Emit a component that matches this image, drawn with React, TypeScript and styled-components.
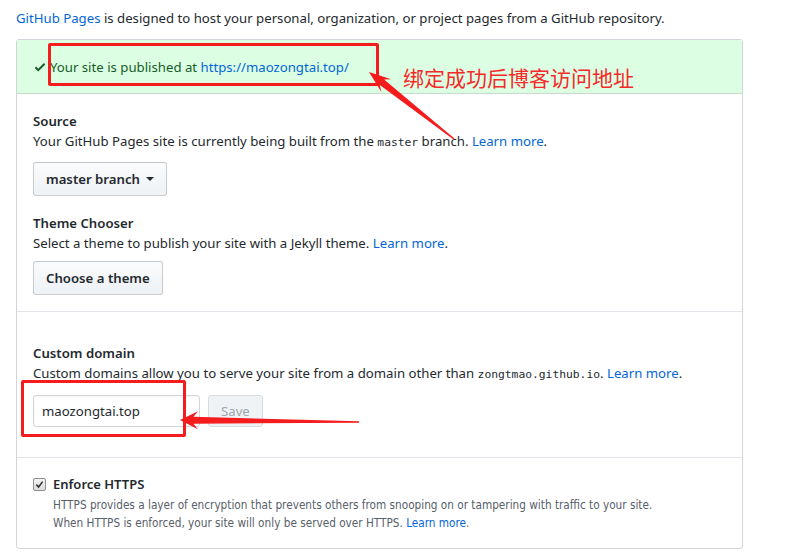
import React from "react";
import styled, { createGlobalStyle } from "styled-components";

const GlobalStyle = createGlobalStyle`
  html, body { margin: 0; padding: 0; background: #fff; }
  body {
    font-family: "Noto Sans", "Open Sans", "Noto Sans CJK SC", sans-serif;
    color: #24292e;
    font-size: 13.2px;
  }
`;

const Page = styled.div`
  position: relative;
  width: 798px;
  height: 558px;
  padding: 8px 0 0 16px;
  box-sizing: border-box;
  overflow: hidden;
`;

const Intro = styled.p`
  margin: 0 0 10px;
  line-height: 21px;
  font-size: 13.2px;
`;

const Link = styled.a`
  color: #0366d6;
  text-decoration: none;
`;

const Box = styled.div`
  width: 727px;
  border: 1px solid #d1d5da;
  border-radius: 3px;
  box-sizing: border-box;
`;

const Flash = styled.div`
  display: flex;
  align-items: center;
  gap: 3px;
  height: 54px;
  padding: 0 16px;
  background: #dcffe4;
  border-bottom: 1px solid #c9d8cc;
  color: #165c26;
  font-size: 13.2px;
  box-sizing: border-box;
`;

const Section = styled.div<{ $top: number; $bottom: number; $last?: boolean }>`
  padding: ${(p) => p.$top}px 16px ${(p) => p.$bottom}px;
  border-bottom: ${(p) => (p.$last ? "none" : "1px solid #e1e4e8")};
`;

const Heading = styled.h3`
  margin: 0;
  font-size: 13.2px;
  font-weight: 600;
  line-height: 20px;
`;

const Desc = styled.p`
  margin: 0;
  font-size: 13.2px;
  line-height: 21px;
`;

const Mono = styled.code`
  font-family: "DejaVu Sans Mono", "Liberation Mono", monospace;
  font-size: 11.3px;
`;

const Button = styled.button<{ $mt: number; $disabled?: boolean }>`
  display: inline-flex;
  align-items: center;
  gap: 6px;
  margin-top: ${(p) => p.$mt}px;
  height: 34px;
  padding: 0 12px;
  font-family: inherit;
  font-size: 13.2px;
  font-weight: 600;
  color: ${(p) => (p.$disabled ? "#a0a6ad" : "#24292e")};
  background: ${(p) =>
    p.$disabled ? "#eff3f6" : "linear-gradient(-180deg, #fafbfc 0%, #eff3f6 90%)"};
  border: 1px solid ${(p) => (p.$disabled ? "#d9dcdf" : "rgba(27,31,35,0.2)")};
  border-radius: 3px;
  box-sizing: border-box;
`;

const Caret = styled.span`
  width: 0;
  height: 0;
  border-left: 4px solid transparent;
  border-right: 4px solid transparent;
  border-top: 4px solid #24292e;
`;

const SubHeading = styled(Heading)`
  margin-top: 17px;
`;

const InputRow = styled.div`
  display: flex;
  gap: 8px;
  margin-top: 10px;
`;

const Input = styled.div`
  display: flex;
  align-items: center;
  width: 167px;
  height: 32px;
  padding: 0 8px;
  border: 1px solid #d1d5da;
  border-radius: 3px;
  box-sizing: border-box;
  font-size: 13.2px;
  box-shadow: inset 0 1px 2px rgba(27,31,35,0.05);
`;

const SaveButton = styled(Button)`
  height: 32px;
  margin-top: 0;
  font-weight: 400;
  padding: 0 12px;
`;

const CheckRow = styled.div`
  display: flex;
  align-items: center;
  gap: 7px;
`;

const CheckBox = styled.span`
  display: inline-flex;
  align-items: center;
  justify-content: center;
  width: 11px;
  height: 11px;
  border: 1px solid #8f8f8f;
  border-radius: 2px;
  background: linear-gradient(#f4f4f4, #dcdcdc);
`;

const CheckLabel = styled.span`
  font-size: 13px;
  font-weight: 600;
  line-height: 20px;
`;

const Notes = styled.div`
  margin-top: 3px;
  padding-left: 20px;
`;

const Note = styled.p`
  margin: 0;
  font-family: "Liberation Sans Narrow", "DejaVu Sans Condensed", "Noto Sans", sans-serif;
  font-size: 11.7px;
  line-height: 17.5px;
  color: #586069;
`;

const RedBox = styled.div<{ $l: number; $t: number; $w: number; $h: number }>`
  position: absolute;
  left: ${(p) => p.$l}px;
  top: ${(p) => p.$t}px;
  width: ${(p) => p.$w}px;
  height: ${(p) => p.$h}px;
  border: 3px solid #f41c1c;
  border-radius: 2px;
  box-sizing: border-box;
  pointer-events: none;
`;

const Annotation = styled.div`
  position: absolute;
  left: 403px;
  top: 63px;
  font-family: "Noto Sans CJK SC", sans-serif;
  font-size: 21px;
  line-height: 28px;
  color: #f52a2a;
  pointer-events: none;
`;

const Overlay = styled.svg`
  position: absolute;
  left: 0;
  top: 0;
  pointer-events: none;
`;

function arrow(
  tx: number, ty: number, hx: number, hy: number,
  headLen: number, headW: number, tailW: number, neckW: number
) {
  const dx = hx - tx, dy = hy - ty;
  const len = Math.hypot(dx, dy);
  const ux = dx / len, uy = dy / len;
  const nx = -uy, ny = ux;
  const bx = hx - ux * headLen, by = hy - uy * headLen;
  const nbx = hx - ux * headLen * 0.75, nby = hy - uy * headLen * 0.75;
  const pts = [
    [tx + nx * tailW / 2, ty + ny * tailW / 2],
    [nbx + nx * neckW / 2, nby + ny * neckW / 2],
    [bx + nx * headW / 2, by + ny * headW / 2],
    [hx, hy],
    [bx - nx * headW / 2, by - ny * headW / 2],
    [nbx - nx * neckW / 2, nby - ny * neckW / 2],
    [tx - nx * tailW / 2, ty - ny * tailW / 2],
  ];
  return pts.map((p) => p.map((v) => v.toFixed(1)).join(",")).join(" ");
}

export default function App() {
  return (
    <>
      <GlobalStyle />
      <Page>
        <Intro>
          <Link>GitHub Pages</Link> is designed to host your personal, organization, or project pages from a GitHub repository.
        </Intro>
        <Box>
          <Flash>
            <svg width="14" height="14" viewBox="0 0 12 16">
              <path fill="#165c26" fillRule="evenodd" d="M12 5l-8 8-4-4 1.5-1.5L4 10l6.5-6.5L12 5z" />
            </svg>
            <span>
              Your site is published at <Link>https://maozongtai.top/</Link>
            </span>
          </Flash>
          <Section $top={17} $bottom={16}>
            <Heading>Source</Heading>
            <Desc>
              Your GitHub Pages site is currently being built from the <Mono>master</Mono> branch. <Link>Learn more</Link>.
            </Desc>
            <Button $mt={9}>
              master branch <Caret />
            </Button>
            <SubHeading>Theme Chooser</SubHeading>
            <Desc>
              Select a theme to publish your site with a Jekyll theme. <Link>Learn more</Link>.
            </Desc>
            <Button $mt={7}>Choose a theme</Button>
          </Section>
          <Section $top={31} $bottom={30}>
            <Heading>Custom domain</Heading>
            <Desc>
              Custom domains allow you to serve your site from a domain other than <Mono>zongtmao.github.io</Mono>. <Link>Learn more</Link>.
            </Desc>
            <InputRow>
              <Input>maozongtai.top</Input>
              <SaveButton $mt={0} $disabled>Save</SaveButton>
            </InputRow>
          </Section>
          <Section $top={16} $bottom={16} $last>
            <CheckRow>
              <CheckBox>
                <svg width="9" height="9" viewBox="0 0 10 10">
                  <path d="M1.5 5.2 L4 7.8 L8.5 1.8" fill="none" stroke="#333" strokeWidth="1.8" />
                </svg>
              </CheckBox>
              <CheckLabel>Enforce HTTPS</CheckLabel>
            </CheckRow>
            <Notes>
              <Note>HTTPS provides a layer of encryption that prevents others from snooping on or tampering with traffic to your site.</Note>
              <Note>
                When HTTPS is enforced, your site will only be served over HTTPS. <Link>Learn more</Link>.
              </Note>
            </Notes>
          </Section>
        </Box>

        <RedBox $l={48} $t={43} $w={331} $h={43} />
        <RedBox $l={21} $t={380} $w={165} $h={57} />
        <Annotation>绑定成功后博客访问地址</Annotation>
        <Overlay width="798" height="558" viewBox="0 0 798 558">
          <polygon fill="#f41c1c" points={arrow(454, 139, 369, 72, 22, 16, 1.5, 7)} />
          <polygon fill="#f41c1c" points={arrow(359, 422, 180, 420, 18, 18, 1.5, 7)} />
        </Overlay>
      </Page>
    </>
  );
}
